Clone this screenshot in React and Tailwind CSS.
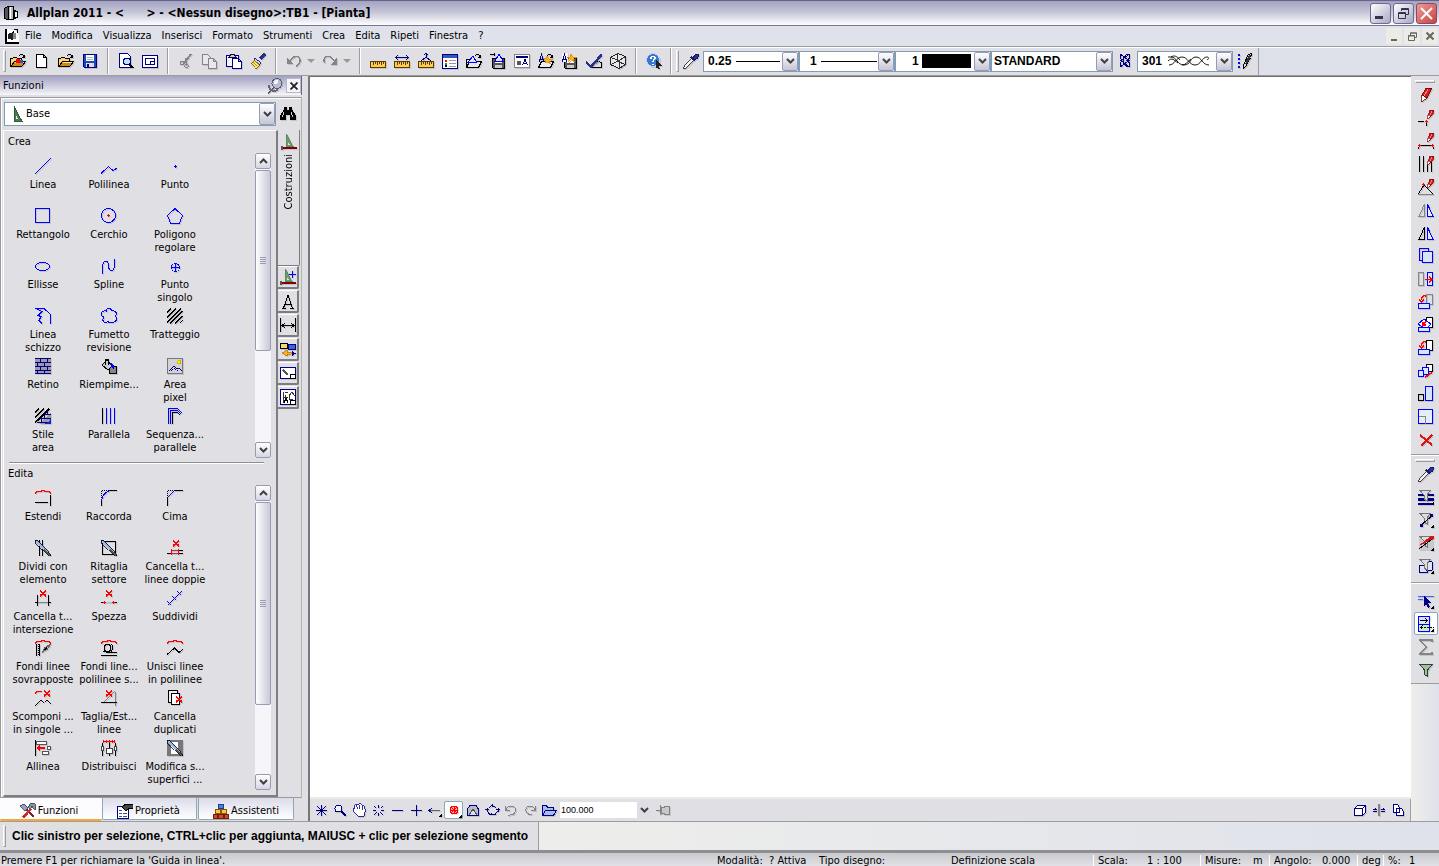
import React from 'react';

const B = '#0000ff';
const N = '#000084';
const K = '#000000';
const R = '#ff0000';
const G = '#848484';

// Small pieces shared by several glyphs
const Cross = ({ x = 6, y = 0 }) => (
  <path d={`M${x} ${y + 0.5}l6 5.5M${x + 6} ${y + 0.5}l-6 5.5`} stroke={R} strokeWidth="1.6" />
);
const RedPencil = ({ x = 0, y = 0 }) => (
  <g transform={`translate(${x} ${y})`}>
    <path d="M1 5L3 0l4 0-1 4-4 4z" fill="#d81c1c" stroke="#840000" strokeWidth="0.7" />
    <path d="M1 5l-.6 4L4 6z" fill="#fff" stroke="#840000" strokeWidth="0.6" />
    <path d="M3 5l2-4" stroke="#ff9a9a" strokeWidth="0.8" />
  </g>
);
const RedBrace = () => <path d="M.5 4V2.500h1V1.500h5V.5h3v1h5v1h1V4" stroke={R} />;
const Funnel = ({ fill = '#dcdce0', stroke = '#777' }) => (
  <path d="M1.500 1h11L9 6v6l-3-2V6z" fill={fill} stroke={stroke} />
);
const Folder = () => (
  <>
    <path d="M.5 13.500V5.500h2l1-1h3l1 1h4v3" fill="#ffd36b" stroke={K} />
    <path d="M.8 13.500l3.700-5h11l-3.700 5z" fill="#c98b17" stroke={K} />
    <path d="M5 9.500h8.500" stroke="#ffe59a" />
  </>
);
const OpenArrow = () => <path d="M9 2.500C10.500 1 13 1 14 3.500M14.500 1.500V4.500H12" stroke={K} />;
const Disk = () => (
  <>
    <path d="M2.500 5.500h12v10h-11l-1-1z" fill="#555" stroke={K} />
    <path d="M5 5.500h7v4H5z" fill="#fff" stroke="none" />
    <path d="M5 11.500h7v3.500H5z" fill="#ccc" stroke="none" />
  </>
);
const Triangle = () => (
  <>
    <path d="M5.500.500V12.500H12z" fill="#6d9c6d" stroke="#5b8b5f" />
    <path d="M7 8v3h2z" fill="#e0dfe3" />
  </>
);
const Ruler = () => (
  <>
    <path d="M.5 8.500h15v6H.5z" fill="#ffcc4d" stroke="#5a3c00" />
    <path d="M3.500 9v3M5.500 9v2M7.500 9v3M9.500 9v2M11.500 9v3M13.500 9v2" stroke="#5a3c00" />
  </>
);
const Knife = () => (
  <>
    <path d="M0 0h2.500L12 10l4 5.500h-2L8 10 .5 2.500z" fill="#9db8e8" stroke={K} strokeWidth="0.8" />
    <path d="M9 9.500l6 6" stroke="#555" strokeWidth="2" />
  </>
);

const ICONS = {
  app: (
    <>
      <path d="M1 3.500l4-2v13l-4-1z" fill="#555" stroke={K} />
      <path d="M5.500 1.500h5v13h-5z" fill="#bbb" stroke={K} />
      <path d="M7.500 2v12" stroke="#fff" />
      <path d="M11 5.500l3 1v6l-3 1z" fill="#f5f5f5" stroke={K} />
    </>
  ),
  doc: (
    <>
      <path d="M1 1.500v13h13v-8l-3-4z" fill="#fff" stroke="#fff" />
      <path d="M1.500 1v13.500H15" stroke={K} strokeWidth="2" />
      <path d="M4 6l5-2v8l-5-1z" fill="#222" />
      <path d="M9 5h3v6H9z" fill="#888" />
      <path d="M10 1.500h3M13.500 1v4M9.500 3v2" stroke={K} />
    </>
  ),
  project: (<><Folder /><path d="M6 6h4v4H6z" fill={R} /><path d="M10 7h3v3h-3z" fill="#2d50d8" /><OpenArrow /></>),
  newFile: <path d="M2.500 1.500h7l3 3v10h-10zM9.500 1.500v3h3" fill="#fff" stroke={K} />,
  open: (<><Folder /><OpenArrow /></>),
  save: (
    <>
      <path d="M1.500 1.500h13v13h-12l-1-1z" fill="#2049b8" stroke={N} />
      <path d="M4 2h8v6H4z" fill="#fff" />
      <path d="M5 4.500h6M5 6.500h6" stroke="#9bb" />
      <path d="M4 10h8v4H4z" fill="#ddd" />
      <path d="M5 11h2v3H5z" fill={N} />
    </>
  ),
  preview: (
    <>
      <path d="M1.500.5h8l3 3v11h-11z" fill="#fff" stroke={N} />
      <circle cx="9" cy="8.500" r="3.500" fill="#bfe3f5" stroke={N} />
      <path d="M11.500 11l3.500 4" stroke={K} strokeWidth="2" />
    </>
  ),
  layout: (
    <>
      <path d="M.5 2.500h15v12H.5zM3.500 5.500h9v6h-9z" fill="#fff" stroke={N} />
      <path d="M8.500 11V8.500H12" stroke={N} />
    </>
  ),
  cut: (
    <>
      <path d="M12.500 1L6 11M8 5l.5 8" stroke={G} strokeWidth="1.500" />
      <path d="M13 1L9 6l-2 3" stroke={G} strokeWidth="2" />
      <circle cx="4" cy="10" r="2" stroke={G} /><circle cx="8.500" cy="13" r="1.800" stroke={G} />
    </>
  ),
  copy: (
    <>
      <path d="M.5 1.500h5l3 3v7h-8z" fill="#e8e8ea" stroke={G} />
      <path d="M6.500 5.500h5l3 3v7h-8zM11.500 5.500v3h3" fill="#e8e8ea" stroke={G} />
    </>
  ),
  paste: (
    <>
      <path d="M.5 2.500h12v11H.5z" fill="#f4f4f8" stroke={N} strokeWidth="1.500" />
      <path d="M3 4.500l2-3h3l2 3z" fill="#f0d840" stroke={N} />
      <path d="M6.500 5.500h6l3 3v7h-9zM12.500 5.500v3h3" fill="#fff" stroke={N} />
    </>
  ),
  brush: (
    <>
      <path d="M15 1l-5 5" stroke="#27357f" strokeWidth="3" />
      <path d="M5 5l6 5-1.500 2L4 7z" fill="#c4d6f2" stroke={N} strokeWidth="0.8" />
      <path d="M4 7l6 5-4 3.500L.5 10z" fill="#ffe36b" stroke="#705000" strokeWidth="0.800" />
      <path d="M3 9l4 4M5 8l4 4" stroke="#a87800" strokeWidth="0.800" />
    </>
  ),
  undo: (<><path d="M1 4v7h6z" fill={G} /><path d="M4 8C7 2 14 2 14 8c0 2-2 4-4 5" stroke={G} strokeWidth="1.500" /></>),
  redo: (<><path d="M15 4v8H9z" fill={G} /><path d="M12 8C9 2 2 2 2 7c0 1 0 2 1 3" stroke={G} strokeWidth="1.500" /></>),
  ruler: <Ruler />,
  distance: (<><Ruler /><path d="M1 4.500h14M4 2L1.500 4.500 4 7M12 2l2.500 2.500L12 7" stroke={N} /></>),
  angle: (<><Ruler /><path d="M8 0v4L3 8M8 4l5 4M6 2l2-2 2 2" stroke={N} /></>),
  list: (
    <>
      <path d="M.5 1.500h15v14H.5z" fill="#fff" stroke={N} />
      <path d="M1 2h14v2.500H1z" fill="#3159b8" />
      <path d="M3 7h2M3 8h2" stroke={R} /><path d="M3 10.500h2" stroke="#0a0" strokeWidth="2" /><path d="M3 13h2" stroke={N} strokeWidth="2" />
      <path d="M7 7.500h7M7 10.500h7M7 13.500h7" stroke="#999" />
    </>
  ),
  layerOpen: (
    <>
      <path d="M.5 14.500l3-6h12l-3 6zM.5 14V6.500h3" fill="#e6e6e6" stroke={K} />
      <path d="M7 3l3.500 6h-8z" fill="#d9e8ff" stroke={B} />
      <OpenArrow />
    </>
  ),
  layerSave: (<><Disk /><path d="M0 1.500h4M4 0v3" stroke={K} /><path d="M9 1l4 7H5z" fill="#d9e8ff" stroke={B} /></>),
  textWin: (
    <>
      <path d="M.5 1.500h15v13H.5z" fill="#fff" stroke={G} />
      <path d="M2 4h12" stroke={N} strokeWidth="2" />
      <circle cx="5" cy="10" r="2.500" fill="#555" />
      <path d="M8.500 12.500L11 6.500l2.500 6M9.500 10.500h3" stroke={N} />
    </>
  ),
  starOpen: (
    <>
      <path d="M.5 14.500l3-6h12l-3 6z" fill="#eee" stroke={K} />
      <path d="M1 8.500L3.500 1.500 6 8.500M2 6h3" stroke={N} />
      <path d="M9 3l1.500 3h4l-3 2 1 3L9 9l-2 1 0-3-2-2h3z" fill="#ffb319" stroke="#d07800" strokeWidth="0.600" />
      <OpenArrow />
    </>
  ),
  starSave: (
    <>
      <Disk />
      <path d="M0 0h6v9H0z" fill="#f2f2f6" />
      <path d="M0 8.500L2.500 1.500 5 8.500M1 6h3" stroke={N} />
      <path d="M9 1l1.500 3h4l-3 2 1 3L9 7 6.500 9l.5-3-2-2h3z" fill="#ffb319" stroke="#d07800" strokeWidth="0.600" />
    </>
  ),
  check: (
    <>
      <path d="M5 14.500h10v-5L11 8" stroke={K} />
      <path d="M0 9l5 5L16 1" stroke="#24308c" strokeWidth="2.500" />
      <path d="M8 12l5-4" stroke={G} />
    </>
  ),
  cube: (
    <>
      <path d="M.5 4.500L8 .5l7.500 3v8l-6.500 4-8.500-4z" fill="#e8e8ec" stroke="#222" />
      <path d="M.5 4.500l8.500 3 6.500-4M9 7.500v8M7.500 1v7.500M.5 11.500l7-3 8 3" stroke="#333" />
    </>
  ),
  help: (
    <>
      <circle cx="7" cy="7" r="6.500" fill="#3a78cf" stroke="#bcd5f5" />
      <path d="M5 5.500C5 2.500 9.500 3 9 5.500 8.700 7 7 6.500 7 9M7 10.500v1" stroke="#fff" strokeWidth="1.500" />
      <path d="M10 7l6 6-3 0 1 3-2 0-1-2-1 1z" fill="#222" />
    </>
  ),
  dropper: (
    <>
      <path d="M9 5L2 12l-1.500 3.500L4 14l7-7z" fill="#f4f4f4" stroke="#333" strokeWidth="0.900" />
      <path d="M8 4l4 4" stroke="#1b1b6b" strokeWidth="2" />
      <path d="M10 5l3-4 2.500 1-.5 2.500L12 7z" fill="#2333a8" stroke="#14145f" />
    </>
  ),
  hatchLine: (
    <path d="M4 1.500l8 6-8 6M12 1.500l-8 6 8 6M3.500 1v5M3.500 9v5M12 1.500h-2l-4 3v5l4 4h2v-4l-2-2 2-2z" stroke={N} />
  ),
  pencilDots: (
    <>
      <path d="M2 1v14" stroke={B} strokeWidth="2" strokeDasharray="2 2" />
      <path d="M7 11L11 2l3.500-1.500-1 4L9 13l-2.500 2z" fill="#ddd" stroke={K} />
      <path d="M9 11l4-9" stroke="#333" strokeWidth="2" />
    </>
  ),
  binoculars: (
    <>
      <path d="M4 1h3v3h2V1h3v2l4 7v4h-6v-5H6v5H0v-4l4-7V1z" fill={K} />
      <path d="M4 6l-2 5M11 6l2 5" stroke="#fff" strokeWidth="0.800" />
    </>
  ),
  pinRound: (
    <>
      <path d="M7 10l-6 5" stroke="#555" strokeWidth="1.500" />
      <path d="M2 7c0 5 4 7 9 5" stroke="#667" strokeWidth="2" />
      <circle cx="10" cy="5.500" r="5" fill="#b8bccb" stroke="#5b6076" />
      <circle cx="9" cy="4" r="2" fill="#f1f3fa" />
    </>
  ),
  base: (<><path d="M5 0v15.500h8z" fill="#4c7c4c" stroke="#2f5a38" /><path d="M7 9v4h2z" fill="#e8f1e8" /></>),

  // Crea
  line: <path d="M0 16L16 0" stroke={B} />,
  polyline: <path d="M0 15.500L7.500 8.500l4.500 4 4-2.500" stroke={B} />,
  point: <path d="M7 8.500h3M8.500 7v3" stroke={B} />,
  rect: <path d="M.5 .5h14v14h-14z" stroke={B} />,
  circle: (<><circle cx="7.500" cy="7.500" r="7" stroke={B} /><path d="M6 7.500h3M7.500 6v3" stroke={R} /></>),
  pentagon: <path d="M8 .5l7.500 7-3 7.500h-9L.5 7.500z" stroke={B} />,
  ellipse: <ellipse cx="7.500" cy="8.500" rx="7" ry="4" stroke={B} />,
  spline: <path d="M1.500 15.500V9C2 3 6 1 7.500 6v3c1 5 5 5 6-1V.5" stroke={B} />,
  singlePoint: (<><circle cx="8.500" cy="9.500" r="4" stroke={B} /><path d="M4 9.500h9M8.500 5v9" stroke={B} /></>),
  sketch: <path d="M0 .5h9l6.500 6V15.500M1 .5l6 3-4 4 3 1-2 4 3 3" stroke={B} />,
  cloud: (
    <path d="M5 3C5-.5 10-.5 11 3c5-1 5 4 3 5 3 3 1 7-3 6-2 2-3 1-4-1-3 3-7 0-4-4C-1 8-1 2 5 3z" stroke={B} />
  ),
  hatch: <path d="M0 4.500L4 .5M0 9.500L9 .5M0 14.500L14 .5M3 15.500L15.500 3M8 15.500L15.500 8M12.500 15.500l3-3" stroke={K} />,
  brick: (
    <>
      <path d="M0 0h16v16H0z" fill="#9a9aa6" />
      <path d="M0 .5h16M0 4.500h16M0 8.500h16M0 12.500h16M0 15.500h16M5.500 0v4M12.500 0v4M2.500 5v3M9.500 5v3M5.500 9v3M12.500 9v3M2.500 13v3M9.500 13v3" stroke={N} />
    </>
  ),
  fill: (
    <>
      <path d="M8.500 8.500h7v7h-7z" fill={G} stroke={K} />
      <path d="M1 7l5-5 5 6-4 4z" fill="#ccc" stroke={K} />
      <path d="M4.500 7V1.500h3V7" stroke={K} />
      <path d="M9 5c3 0 5 2 4 7l-3-4z" fill={B} />
    </>
  ),
  picture: (
    <>
      <path d="M.5.500h15v15H.5z" fill="#d2d2d6" stroke="#777" />
      <circle cx="12" cy="4" r="2" fill="#ffef00" stroke="#998800" strokeWidth="0.500" />
      <path d="M2 13l5-5 3 3 2-1 3 3" stroke={N} />
      <path d="M4 13l3-3 2 3M10 13l2-1" stroke={N} strokeDasharray="1 1" />
    </>
  ),
  areaStyle: (
    <>
      <path d="M4 16L16 4v12z" fill="#9a9aa6" />
      <path d="M0 4.500L4 .5M0 9.500L9 .5M0 14.500L14 .5M3 13L15 1" stroke={K} />
      <path d="M9 6.500h7M5 10.500h11M2 14.500h10M12.500 3v3M9.500 7v3M6.500 11v4" stroke={N} />
      <path d="M9 16c4-1 6-3 7-6v6z" fill="#1122cc" />
    </>
  ),
  parallel: (<><path d="M1.500 0v16" stroke={K} /><path d="M5.500 0v16M9.500 0v16M13.500 0v16" stroke={B} /></>),
  parallelSeq: (
    <>
      <path d="M1.500 16V.5h9l5 5M3.500 16V2.500h7l4 4" stroke={B} />
      <path d="M5.500 16V4.500h5l3 3" stroke={K} />
    </>
  ),

  // Edita
  extend: (<><RedBrace /><path d="M15.500 5v11M0 12.500h13" stroke={K} /></>),
  fillet: (<><path d="M.5 10V.5H10" stroke={K} strokeDasharray="1 1" /><path d="M.5 11C1 5 5 1 10 .500" stroke={B} /><path d="M.5 11v5M9 .5h7" stroke={K} /></>),
  chamfer: (<><path d="M.5 8V.5H8" stroke={K} strokeDasharray="1 1" /><path d="M.5 7.500L7.500 .5" stroke={B} /><path d="M.5 7v9M8 .5h8" stroke={K} /></>),
  divide: (<><path d="M4.500 0v16M7.500 0v16" stroke={K} /><Knife /></>),
  clip: (<><path d="M1.500 1.500h13v13h-13z" stroke={K} /><Knife /></>),
  eraseDouble: (<><Cross x={6} /><path d="M0 13.500h16M5 10.500h11" stroke={K} /><path d="M5 13.500h6M5 10.500h6" stroke="#a33" /><path d="M4.500 9v6M11.500 9v6" stroke={R} /></>),
  eraseCross: (<><Cross x={5} /><path d="M2.500 5v11M13.500 5v11M0 12.500h3M13 12.500h3" stroke={K} /><path d="M3 12.500h10" stroke={G} /></>),
  breakLine: (<><Cross x={5} /><path d="M0 12.500h16" stroke={K} /><path d="M5 12.500h6" stroke="#bbb" /><path d="M2 12.500h3M3.500 11v3M11 12.500h3M12.500 11v3" stroke={R} /></>),
  subdivide: (<><path d="M2 14L14 2" stroke={K} /><path d="M.5 11.500l4 4M.5 15.500l4-4M5.500 6.500l4 4M5.500 10.500l4-4M10.500 1.500l4 4M10.500 5.500l4-4" stroke={B} /></>),
  mergeLines: (<><RedBrace /><path d="M1.500 4v12M4.500 4v12M8 12l6-7" stroke={K} /><path d="M3 4v12" stroke={K} strokeDasharray="1 1" /><path d="M7.500 12l2-4 6-4-3 5z" stroke="#666" /></>),
  mergePoly: (<><RedBrace /><circle cx="6.500" cy="8" r="3.500" stroke={K} /><path d="M10 4.500c3 1 2 5 0 7M2 11.500h5M5 12.500h11M0 15.500h16" stroke={K} /></>),
  joinPoly: (<><RedBrace /><path d="M0 14.500L7.500 8l4.500 4.500 4-3" stroke={K} /></>),
  explode: (<><path d="M.5 4V2.500h1V1.500h5" stroke={R} /><Cross x={9} /><path d="M0 16l6-6 3 3M10 12l2-2 4 4" stroke={K} /></>),
  trim: (<><path d="M14.500 2v14M3 12L14 1" stroke={G} /><path d="M0 12.500h16" stroke={K} /><Cross x={5} /></>),
  dupDelete: (<><path d="M1.500 .5h9v12h-9z" fill="#eee" stroke={K} /><path d="M4.500 3.500h8v11h-8z" fill="#fff" stroke={K} /><Cross x={9} y={6} /></>),
  align: (
    <>
      <path d="M.5 0v16" stroke={K} />
      <path d="M1.500 1.500h10v3h-10zM12.500 6.500h3v3h-3zM7.500 11.500h6v3h-6z" fill="#fff" stroke="#555" />
      <path d="M1 8l4-3v2h5v2H5v2z" fill={R} />
    </>
  ),
  distribute: (
    <>
      <path d="M2 1.500h12M2.500 0v3M5.500 0v3M8.500 0v3M11.500 0v3M13.500 0v3" stroke={R} />
      <path d="M1.500 3v13M8.500 3v13M14.500 3v13" stroke={K} />
      <path d="M.5 6.500h2v4h-2zM5.500 8.500h6v5h-6zM13.500 6.500h2v4h-2z" fill="#fff" stroke="#444" />
    </>
  ),
  modifyArea: (<><path d="M0 0h16v16H0z" fill="#777" /><path d="M4 2h7v12H4z" fill="#fff" /><Knife /></>),

  // Side tabs
  tabBuild: (<><Triangle /><path d="M1 14h15" stroke="#840000" strokeWidth="2" /><path d="M1 12v4" stroke="#555" strokeWidth="2" /></>),
  tabBase: (<><Triangle /><path d="M1 14h15" stroke="#840000" strokeWidth="2" /><path d="M1 12v4" stroke="#555" strokeWidth="2" /><path d="M12.500 2v7M9 5.500h7" stroke={B} /></>),
  tabText: <path d="M2 15.500h4M10 15.500h4M3.500 15L8 2.500 12.500 15M5 11.500h6" stroke={K} />,
  tabDim: <path d="M.5 1v14M15.500 1v14M2 8.500h12M5 6L2 8.500 5 11M11 6l3 2.500-3 2.500" stroke={K} />,
  tabSwap: (
    <>
      <path d="M.5 2.500h7v5h-7z" fill="#ffd36b" stroke={K} /><path d="M8.500 3.500h7v5h-7z" fill="#3c66c9" stroke={N} />
      <path d="M7 9l-5 3 5 3v-2h4v-2H7z" fill="#ffb319" stroke="#a06000" strokeWidth="0.600" />
      <path d="M12 10l4 2.500-4 2.500z" fill={N} />
    </>
  ),
  tabWindow: (<><path d="M.5 2.500h15v11H.5z" fill="#fff" stroke={N} /><path d="M3 5l5 5" stroke="#555" strokeWidth="1.500" /><path d="M10.500 9.500h5v4h-5z" fill="#fff" stroke={K} /></>),
  tabPlan: (<><path d="M.5.500h15v15H.5z" fill="#fff" stroke={N} /><path d="M3.500 3v11M5 3.500h3M5.500 6v3M3 8.500h5M9 7l3-4 3 4M9.500 7v3h3" stroke="#333" /><path d="M4 13.500l2-4 2 4" stroke={K} /><path d="M10.500 11.500h5v4h-5z" fill="#fff" stroke={K} /></>),

  // Bottom tabs
  tools: (
    <>
      <path d="M5 5l9 9" stroke="#7c2230" strokeWidth="2.500" />
      <path d="M11 6L3 14.500" stroke="#c92a2a" strokeWidth="2.500" />
      <path d="M0 3l4-2 4 4-3 3-3-3z" fill="#8ea6c4" stroke="#334" strokeWidth="0.800" />
      <path d="M8 4l3-4 4 1 1 5-2 0-2-3-2 3z" fill="#8794ac" stroke="#334" strokeWidth="0.800" />
    </>
  ),
  props: (
    <>
      <path d="M.5 3.500h11v12H.5z" fill="#fff" stroke={N} />
      <path d="M2 7.500h3M2 10.500h3M2 13.500h3M6 10.500h4M6 13.500h4" stroke="#3a4a9a" />
      <path d="M5 4l4-3h7v5l-3-1-4 3z" fill="#444" stroke={K} />
    </>
  ),
  bricks: (
    <>
      <path d="M5.500 1.500h5v4h-5z" fill="#4d7fe0" stroke="#1c3f92" />
      <path d="M2.500 6.500h5v4h-5zM8.500 6.500h5v4h-5z" fill="#ffc63b" stroke="#8a5a00" />
      <path d="M.5 11.500h4v4h-4zM5.500 11.500h5v4h-5zM11.500 11.500h4v4h-4z" fill="#cf4a2c" stroke="#7a1c0c" />
    </>
  ),

  // View bar
  star8: <path d="M8.500 3v11M3 8.500h11M4 4l9 9M13 4l-9 9" stroke={N} />,
  zoom: (<><circle cx="6.500" cy="6.500" r="3.500" fill="#f2f6ff" stroke={N} /><path d="M9.500 9.500l4.500 4.500" stroke={N} strokeWidth="1.500" /></>),
  hand: <path d="M2 7l2-1-1-2 2-2 2 1 2-2 2 2 2 1 1 3v3l-1 4H7l-4-4-1-3zM5 3l2 4M8 3l1 4M11 4v4" fill="#fff" stroke={N} strokeWidth="0.800" />,
  burst: <path d="M8.500 3v3M8.500 11v3M3 8.500h3M11 8.500h3M4 4l2.500 2.500M10.500 10.500L13 13M13 4l-2.500 2.500M6.500 10.500L4 13" stroke={N} />,
  minus: <path d="M3 8.500h11" stroke={N} />,
  plus: <path d="M3 8.500h11M8.500 3v11" stroke={N} />,
  back: (<><path d="M2 8.500h11" stroke="#666" /><path d="M5 6L2 8.500 5 11" stroke={N} /><path d="M15 11v4h-4z" fill={K} /></>),
  target: (<><circle cx="8" cy="8" r="4" fill="#ffb0b0" stroke={R} /><path d="M5 5l6 6M11 5l-6 6M8.500 4v8M4 8.500h8" stroke={R} /><path d="M16 12v4h-4z" fill={K} /></>),
  dome: (<><path d="M2.500 13.500V7l3-4h5l3 4v6.500z" fill="#b8bcc8" stroke={N} /><path d="M4 13l4-6 4 6" fill="#e0e0e4" stroke="#555" /></>),
  orbit: <path d="M5 5.500l3-2 4 2M3 9l3 3.500h5l3-3.500M1 7.500h4M3 6v4M12 7.500h4M14 6v4M8 11l-2 2M8.500 2v3" stroke={N} />,
  undoThin: <path d="M5 13c9 1 10-9 3-9-2 0-4 1-5 4M2.500 4v4H7" stroke={G} />,
  redoThin: <path d="M10 13C1 12 3 4 8 4c2 0 4 1 5 4M13.500 4v4H9" stroke={G} />,
  viewOpen: <path d="M1.500 13.500V3.500h4l1 2h6v2M1.500 13.500l3-5h11l-3 5z" fill="#a9bde8" stroke={N} />,
  pin: (<><path d="M1 8h4" stroke={G} /><path d="M5.500 3v10M6 5.500h3l1-1h4v8h-4l-1-1H6z" fill="#c8c8cc" stroke={G} /></>),
  box3d: <path d="M2.500 6.500h8v7h-8zM2.500 6.500l3-3h8v7l-3 3M10.500 6.500l3-3" fill="#fff" stroke={N} />,
  split: (<><path d="M8 2v12" stroke={G} strokeWidth="2" /><path d="M2 7.500h4M2 9.500h4M4.500 6v2M10 7.500h4M10 9.500h4M12.500 6v2" stroke={N} /></>),
  pages: <path d="M3.500 2.500h4l2 3v5h-6zM6.500 6.500h5l2 3v4h-7z" fill="#fff" stroke={N} />,

  // Right tool column
  pencil: (
    <>
      <path d="M4 8L8 1l6 0-5 10z" fill="#d81c1c" stroke="#6d0000" strokeWidth="0.800" />
      <path d="M4 8l-1 7L9 11z" fill="#fff" stroke="#6d0000" strokeWidth="0.800" />
      <path d="M6 9l4-7" stroke="#ff8d8d" />
    </>
  ),
  penNode: (<><RedPencil x={9} /><path d="M0 11.500h6M8.500 13v3" stroke={K} /><path d="M7 11.500h3M8.500 10v3" stroke={R} /></>),
  penSegment: (<><RedPencil x={9} /><path d="M2 12.500h12M.5 14v2M15.500 14v2" stroke={K} /><path d="M0 12.500h3M1.500 11v3M13 12.500h3M14.500 11v3" stroke={R} /></>),
  penParallel: (<><path d="M1.500 0v16M5.500 0v16M9.500 9v7M13.500 6v10" stroke={K} /><RedPencil x={9} /></>),
  penAngle: (<><path d="M0 15.500L6 6l9 9" stroke={K} /><path d="M0 15.500h16" stroke={G} /><RedPencil x={9} /><path d="M4 5.500h3M5.500 4v3" stroke={R} /></>),
  mirrorGray: (<><path d="M1 14.500L6.500 2v12.500z" stroke={G} /><path d="M15 14.500L9.500 2v12.500z" fill="#e9eeff" stroke={B} /></>),
  mirror: (<><path d="M1 14.500L6.500 2v12.500z" stroke={K} /><path d="M15 14.500L9.500 2v12.500z" fill="#e9eeff" stroke={B} /></>),
  copyBlue: (<><path d="M1.500 .5h9v12h-9z" stroke={B} /><path d="M4.500 3.500h10v11h-10z" fill="#d7e6ff" stroke={B} /></>),
  move: (<><path d="M.5 1.500h5v13h-5z" stroke={G} /><path d="M9.500 1.500h5v13h-5z" fill="#d7e6ff" stroke={B} /><path d="M7 8.500h6M11 6l3 2.500-3 2.500" stroke={R} strokeWidth="1.500" /></>),
  rotateGray: (<><path d="M8.500 .5h6v10h-6z" stroke={G} /><path d="M.5 9.500h11v5H.5z" fill="#d7e6ff" stroke={B} /><path d="M8 2C5 1 3 3 3.500 6M1 5l2.500 3L6 5" stroke={R} strokeWidth="1.300" /></>),
  rotateMulti: (<><path d="M8.500 .5h6v10h-6z" fill="#fff" stroke={K} /><path d="M0 7l6-5 7 5-5 5z" fill="#fff" stroke={B} /><path d="M.5 10.500h11v4H.5z" fill="#d7e6ff" stroke={B} /><path d="M9 4L5 7M5 5v3h3" stroke={R} strokeWidth="1.300" /></>),
  rotate: (<><path d="M8.500 .5h6v10h-6z" fill="#fff" stroke={K} /><path d="M.5 9.500h11v5H.5z" fill="#d7e6ff" stroke={B} /><path d="M8 2C5 1 3 3 3.500 6M1 5l2.500 3L6 5" stroke={R} strokeWidth="1.300" /></>),
  copyRow: (<><path d="M8.500 1.500h6v7h-6z" fill="#fff" stroke={K} /><path d="M4.500 4.500h6v7h-6z" fill="#d7e6ff" stroke={B} /><path d="M.5 7.500h5v6h-5z" fill="#d7e6ff" stroke={B} /><path d="M7 14.500l7-5" stroke={R} strokeWidth="1.500" /></>),
  scale: (<><path d="M.5 8.500h5v6h-5z" stroke={K} /><path d="M7.500 .5h7v14h-7z" fill="#d7e6ff" stroke={B} /></>),
  resize: (<><path d="M.5 .5h14v14h-14z" fill="#e4eeff" stroke={B} /><path d="M.5 7.500h7v7" stroke={G} /></>),
  remove: <path d="M2 3l12 10M14 3L3 14" stroke="#e01010" strokeWidth="2" />,
  filterLines: (<><path d="M0 5.500h16M0 14.500h16" stroke={N} strokeWidth="2" /><path d="M0 10h16" stroke={N} strokeWidth="3" /><Funnel /><path d="M16 12v4h-4z" fill={K} /></>),
  filterSegment: (<><Funnel /><path d="M3 13L14 4" stroke={K} /><path d="M2 12h3v3H2zM12 2h3v3h-3z" fill={N} /><path d="M16 12v4h-4z" fill={K} /></>),
  filterColor: (<><path d="M1 2h14v13H1z" fill="#cacace" /><Funnel /><path d="M0 11L13 1h3v3L5 9z" fill="#d41414" /><path d="M1 14L14 4" stroke={K} /><path d="M16 12v4h-4z" fill={K} /></>),
  filterShapes: (<><path d="M1.500 7.500h8v7h-8zM8 3l6 1v8l-5 1z" fill="#dce4f4" stroke={N} /><Funnel /><path d="M16 12v4h-4z" fill={K} /></>),
  select: (<><path d="M0 3.500h16M0 6.500h5" stroke="#4060ff" /><path d="M6 3l8 7h-4l2 4-2 1-2-4-2 3z" fill={N} /><path d="M16 12v4h-4z" fill={K} /></>),
  selectArea: (<><path d="M.5 .5h11v8H.5z" fill="#d6e6ff" stroke={B} /><path d="M.5 8.500h11v7H.5z" fill="#c2f5b8" stroke={B} /><path d="M2 4.500h7M7 2l2 2.500L7 7" stroke={K} /><path d="M3 11.500h13" stroke={K} strokeDasharray="2 1" /><path d="M4.500 9.500l-2 2 2 2" stroke={K} /><path d="M16 12v4h-4z" fill={K} /></>),
  sum: <path d="M14 3V1H2l6 7-6 7h12v-2.500" stroke={G} strokeWidth="1.600" />,
  filter: <path d="M2 2.500h12L9.500 8v6.500l-3-2V8z" fill="#a3bfa0" stroke="#2c402c" />,
};

const Icon = ({ name, shadow = true }) => (
  <svg
    width="16"
    height="16"
    viewBox="0 0 16 16"
    fill="none"
    shapeRendering="crispEdges"
    aria-hidden="true"
    className={shadow ? 'shrink-0 drop-shadow-[1px_1px_0px_rgba(0,0,0,0.12)]' : 'shrink-0'}
  >
    {ICONS[name]}
  </svg>
);

const Chevron = ({ up = false, className = '' }) => (
  <svg width="9" height="6" viewBox="0 0 9 6" fill="none" className={className} aria-hidden="true">
    <path d={up ? 'M1 5l3.500-3.500L8 5' : 'M1 1l3.500 3.500L8 1'} stroke="#404040" strokeWidth="2" />
  </svg>
);

const ToolButton = ({ icon, label, className = 'w-6 h-6' }) => (
  <button type="button" aria-label={label || icon} className={`flex items-center justify-center shrink-0 ${className}`}>
    <Icon name={icon} />
  </button>
);

const Separator = () => (
  <div className="w-3 self-stretch flex justify-center">
    <div className="w-0.5 bg-[#9d9da1] border-r border-white"></div>
  </div>
);

const Grip = () => <div className="w-[3px] h-[22px] border border-l-white border-t-white border-r-[#9d9da1] border-b-[#9d9da1] shrink-0"></div>;

const Combo = ({ label, value, className, textClass, children }) => (
  <div className={`relative flex items-center bg-white border border-[#7f9db9] ${className}`}>
    <select aria-label={label} defaultValue={value} className={`appearance-none w-full h-full bg-transparent outline-none ${textClass}`}>
      <option>{value}</option>
    </select>
    {children}
    <span className="absolute inset-y-0 right-0 w-4 pointer-events-none flex items-center justify-center border border-[#9a9ab2] rounded-[2px] bg-linear-to-b from-white to-[#c5c5d6]">
      <Chevron />
    </span>
  </div>
);

const ScrollBar = ({ thumb }) => (
  <div className="w-4 flex flex-col bg-[#f6f6fa] shrink-0">
    <button type="button" aria-label="Su" className="h-4 w-full flex items-center justify-center border border-[#9a9ab2] rounded-[2px] bg-linear-to-b from-white to-[#d6d6e2]">
      <Chevron up />
    </button>
    <div className={`${thumb} flex flex-col items-center justify-center gap-px border border-[#9a9ab2] rounded-[2px] bg-linear-to-r from-white to-[#c9c9d9] mt-px`}>
      {[1, 2, 3, 4].map(i => <span key={i} className="w-1.5 h-px bg-[#9a9ab2]"></span>)}
    </div>
    <button type="button" aria-label="Giù" className="h-4 w-full mt-auto flex items-center justify-center border border-[#9a9ab2] rounded-[2px] bg-linear-to-b from-white to-[#d6d6e2]">
      <Chevron />
    </button>
  </div>
);

const MENU = ['File', 'Modifica', 'Visualizza', 'Inserisci', 'Formato', 'Strumenti', 'Crea', 'Edita', 'Ripeti', 'Finestra', '?'];

const CREA = [
  ['line', 'Linea'], ['polyline', 'Polilinea'], ['point', 'Punto'],
  ['rect', 'Rettangolo'], ['circle', 'Cerchio'], ['pentagon', 'Poligono', 'regolare'],
  ['ellipse', 'Ellisse'], ['spline', 'Spline'], ['singlePoint', 'Punto', 'singolo'],
  ['sketch', 'Linea', 'schizzo'], ['cloud', 'Fumetto', 'revisione'], ['hatch', 'Tratteggio'],
  ['brick', 'Retino'], ['fill', 'Riempime...'], ['picture', 'Area', 'pixel'],
  ['areaStyle', 'Stile', 'area'], ['parallel', 'Parallela'], ['parallelSeq', 'Sequenza...', 'parallele'],
];

const EDITA = [
  ['extend', 'Estendi'], ['fillet', 'Raccorda'], ['chamfer', 'Cima'],
  ['divide', 'Dividi con', 'elemento'], ['clip', 'Ritaglia', 'settore'], ['eraseDouble', 'Cancella t...', 'linee doppie'],
  ['eraseCross', 'Cancella t...', 'intersezione'], ['breakLine', 'Spezza'], ['subdivide', 'Suddividi'],
  ['mergeLines', 'Fondi linee', 'sovrapposte'], ['mergePoly', 'Fondi line...', 'polilinee s...'], ['joinPoly', 'Unisci linee', 'in polilinee'],
  ['explode', 'Scomponi ...', 'in singole ...'], ['trim', 'Taglia/Est...', 'linee'], ['dupDelete', 'Cancella', 'duplicati'],
  ['align', 'Allinea'], ['distribute', 'Distribuisci'], ['modifyArea', 'Modifica s...', 'superfici ...'],
];

const RIGHT_TOP = ['pencil', 'penNode', 'penSegment', 'penParallel', 'penAngle', 'mirrorGray', 'mirror', 'copyBlue', 'move', 'rotateGray', 'rotateMulti', 'rotate', 'copyRow', 'scale', 'resize', 'remove'];
const RIGHT_MID = ['dropper', 'filterLines', 'filterSegment', 'filterColor', 'filterShapes'];

const ToolSection = ({ title, items, thumb }) => (
  <section className="pt-[3px] pb-1">
    <h2 className="pl-1 h-[14px] leading-[14px]">{title}</h2>
    <div className="flex mt-1">
      <div className="grid grid-cols-[repeat(3,66px)] auto-rows-[50px] pt-[5px] pl-1.5">
        {items.map(([icon, a, b]) => (
          <button key={icon} type="button" className="flex flex-col items-center leading-[13px] whitespace-nowrap">
            <Icon name={icon} />
            <span className="mt-1">{a}</span>
            {b && <span>{b}</span>}
          </button>
        ))}
      </div>
      <div className="ml-auto mr-[5px] flex">
        <ScrollBar thumb={thumb} />
      </div>
    </div>
  </section>
);

const TitleBar = () => (
  <header className="h-[26px] shrink-0 flex items-center pl-[3px] pr-0.5 border-y border-t-[#65648a] border-b-[#77769a] bg-linear-to-b from-[#a3a2c2] via-[#c9c9da] to-white">
    <Icon name="app" shadow={false} />
    <h1 className="ml-2 font-bold text-[12px] whitespace-pre">{'Allplan 2011 - <      > - <Nessun disegno>:TB1 - [Pianta]'}</h1>
    <div className="ml-auto flex gap-0.5">
      <button type="button" aria-label="Riduci a icona" className="w-[21px] h-[21px] rounded-[3px] border border-[#6b6a90] bg-linear-to-br from-white to-[#a9a8c4] flex items-end p-1">
        <span className="w-2 h-[3px] bg-[#333350]"></span>
      </button>
      <button type="button" aria-label="Ripristina" className="w-[21px] h-[21px] rounded-[3px] border border-[#6b6a90] bg-linear-to-br from-white to-[#a9a8c4] flex items-center justify-center">
        <svg width="11" height="11" viewBox="0 0 11 11" fill="none" stroke="#333350">
          <path d="M3.500 3V.5h7v6H8M3 1.500h8M.5 4.500h7v6h-7zM.5 5.500h7" />
        </svg>
      </button>
      <button type="button" aria-label="Chiudi" className="w-[21px] h-[21px] rounded-[3px] border border-[#8a4a5a] bg-linear-to-br from-[#e99a9a] to-[#c9403f] flex items-center justify-center">
        <svg width="13" height="13" viewBox="0 0 13 13" stroke="#fff" strokeWidth="2">
          <path d="M1 1l11 11M12 1L1 12" />
        </svg>
      </button>
    </div>
  </header>
);

const MenuBar = () => (
  <nav className="h-[21px] shrink-0 flex items-center pl-1 bg-[#dfe2eb] border-b border-[#9d9da1]">
    <Icon name="doc" shadow={false} />
    <div className="flex">
      {MENU.map(item => (
        <button key={item} type="button" className="px-[5px]">{item}</button>
      ))}
    </div>
    <div className="ml-auto flex gap-0.5 pr-px text-[#66665e]">
      <button type="button" aria-label="Riduci finestra" className="w-4 h-4 bg-[#ecebe6] flex items-end justify-center pb-[3px]">
        <span className="w-1.5 h-0.5 bg-[#66665e]"></span>
      </button>
      <button type="button" aria-label="Ripristina finestra" className="w-4 h-4 bg-[#ecebe6] flex items-center justify-center">
        <svg width="9" height="9" viewBox="0 0 9 9" fill="none" stroke="currentColor">
          <path d="M2.500 3V1h6v4.500H7M2 1h7M.5 3.500h6v5h-6zM0 4h7" />
        </svg>
      </button>
      <button type="button" aria-label="Chiudi finestra" className="w-4 h-4 bg-[#ecebe6] flex items-center justify-center">
        <svg width="8" height="8" viewBox="0 0 8 8" stroke="currentColor" strokeWidth="2">
          <path d="M.5 .5l7 7M7.500 .5l-7 7" />
        </svg>
      </button>
    </div>
  </nav>
);

const Caret = () => (
  <svg width="12" height="6" viewBox="0 0 12 6" aria-hidden="true"><path d="M1 1h8L5 5z" fill="#9a9a90" /></svg>
);

const Toolbar = () => (
  <div className="h-[29px] shrink-0 flex bg-[#dfe1ea] border-t border-b border-t-white border-b-[#9d9da1]">
    <div className="flex items-center bg-[#e0dfe3] pl-[3px] pr-px pb-px border-r border-[#9d9da1]">
      <Grip />
      {['project', 'newFile', 'open', 'save'].map(i => <ToolButton key={i} icon={i} />)}
      <Separator />
      {['preview', 'layout'].map(i => <ToolButton key={i} icon={i} />)}
      <Separator />
      {['cut', 'copy', 'paste', 'brush'].map(i => <ToolButton key={i} icon={i} />)}
      <Separator />
      <ToolButton icon="undo" />
      <Caret />
      <ToolButton icon="redo" />
      <Caret />
      <Separator />
      {['ruler', 'distance', 'angle', 'list', 'layerOpen', 'layerSave', 'textWin', 'starOpen', 'starSave', 'check', 'cube'].map(i => (
        <ToolButton key={i} icon={i} />
      ))}
      <Separator />
      <ToolButton icon="help" />
      <div className="w-0.5 self-stretch mx-1 bg-[#9d9da1] border-r border-white"></div>
      <Grip />
      <ToolButton icon="dropper" />
      <Combo label="Spessore penna" value="0.25" className="w-24 h-[21px]" textClass="font-['Liberation_Sans',sans-serif] font-bold text-xs pl-1">
        <span className="absolute left-8 w-11 h-px bg-black pointer-events-none"></span>
      </Combo>
      <Combo label="Tipo di linea" value="1" className="w-24 h-[21px]" textClass="font-['Liberation_Sans',sans-serif] font-bold text-xs pl-2.5">
        <span className="absolute left-[21px] w-14 h-px bg-black pointer-events-none"></span>
      </Combo>
      <Combo label="Colore" value="1" className="w-24 h-[21px]" textClass="font-['Liberation_Sans',sans-serif] font-bold text-xs pl-4">
        <span className="absolute left-[26px] w-[49px] h-3.5 bg-black pointer-events-none"></span>
      </Combo>
      <Combo label="Layer" value="STANDARD" className="w-[122px] h-[21px]" textClass="font-['Liberation_Sans',sans-serif] font-bold text-xs pl-0.5" />
      <ToolButton icon="hatchLine" />
      <Combo label="Motivo" value="301" className="w-24 h-[21px]" textClass="font-['Liberation_Sans',sans-serif] font-bold text-xs pl-1">
        <svg width="42" height="12" viewBox="0 0 42 12" fill="none" stroke="#000" className="absolute left-[30px] pointer-events-none">
          <path d="M0 2h3c6 0 6 8 13 8S22 2 28 2s6 8 13 8M1 10c6 0 7-8 13-8s7 8 13 8 7-8 12-8c2 0 2 2 0 3M3 2c3-2 6-1 9 3M14 10c4 0 6-4 9-6M0 6c4-4 6-1 10 2" strokeWidth="0.900" />
        </svg>
      </Combo>
      <ToolButton icon="pencilDots" />
    </div>
  </div>
);

const FunctionPanel = () => (
  <aside className="w-[302px] shrink-0 flex flex-col bg-[#e0dfe3]">
    <div className="h-[19px] shrink-0 flex items-center pl-[3px] border-r border-[#65648a] bg-linear-to-b from-[#a3a2c2] to-[#f6f6fa]">
      <h2>Funzioni</h2>
      <div className="ml-auto flex items-center gap-0.5">
        <ToolButton icon="pinRound" label="Blocca" className="w-[18px] h-4" />
        <button type="button" aria-label="Chiudi pannello" className="w-[15px] h-[15px] bg-[#f4f4fa] border border-[#b9b9cc] flex items-center justify-center">
          <svg width="8" height="8" viewBox="0 0 8 8" stroke="#222" strokeWidth="1.800"><path d="M.5 .5l7 7M7.500 .5l-7 7" /></svg>
        </button>
      </div>
    </div>
    <div className="flex-1 mt-0.5 flex flex-col border border-[#9a9a9e] border-r-[#b4b4a8] shadow-[inset_1px_1px_0_#fff]">
      <div className="flex items-center pl-[3px] py-1">
        <Combo label="Modulo" value="Base" className="w-[272px] h-6" textClass="pl-[21px]">
          <span className="absolute left-1 pointer-events-none"><Icon name="base" shadow={false} /></span>
        </Combo>
        <ToolButton icon="binoculars" label="Cerca" />
      </div>
      <div className="flex-1 flex pl-0.5">
        <div className="w-[275px] pt-px border border-t-white border-l-white border-r-[#7d7d82] border-b-[#7d7d82] border-r-2 border-b-2">
          <ToolSection title="Crea" items={CREA} thumb="h-[181px]" />
          <div className="h-0.5 ml-[5px] mr-3 bg-[#8e8e96] border-b border-white"></div>
          <ToolSection title="Edita" items={EDITA} thumb="h-[203px]" />
        </div>
        <div className="flex flex-col w-[22px]">
          <button type="button" className="h-[136px] w-[22px] flex flex-col items-center gap-1 pt-1 border-r border-b border-[#7d7d82] rounded-br-[2px]">
            <Icon name="tabBuild" />
            <span className="[writing-mode:vertical-rl] rotate-180">Costruzioni</span>
          </button>
          {['tabBase', 'tabText', 'tabDim', 'tabSwap', 'tabWindow', 'tabPlan'].map(i => (
            <ToolButton key={i} icon={i} className="w-[21px] h-[23px] mb-px border-r-2 border-b-2 border-t border-t-white border-[#7d7d82] rounded-br-[2px]" />
          ))}
        </div>
      </div>
    </div>
    <div className="h-[23px] shrink-0 flex">
      <button type="button" className="w-[102px] pr-1 pt-[5px] flex items-center justify-center gap-0.5 bg-[#fcfcfe] border-b-2 border-[#f5a833] rounded-b-[2px]">
        <Icon name="tools" shadow={false} />
        Funzioni
      </button>
      <button type="button" className="w-[95px] h-[22px] pr-0.5 pt-1 flex items-center justify-center gap-0.5 bg-linear-to-b from-[#dcdcea] to-white border border-t-0 border-[#91a7b4] rounded-b-[2px]">
        <Icon name="props" shadow={false} />
        Proprietà
      </button>
      <button type="button" className="w-[96px] h-[22px] ml-px pt-1 flex items-center justify-center gap-0.5 bg-linear-to-b from-[#dcdcea] to-white border border-t-0 border-[#91a7b4] rounded-b-[2px]">
        <Icon name="bricks" shadow={false} />
        Assistenti
      </button>
    </div>
  </aside>
);

const ViewBar = () => (
  <div className="h-[22px] shrink-0 flex items-center pl-px pr-[3px] bg-[#e0dfe3] border-r border-[#9d9da1]">
    {['star8', 'zoom', 'hand', 'burst', 'minus', 'plus', 'back'].map(i => (
      <ToolButton key={i} icon={i} className="w-[19px] h-5" />
    ))}
    <ToolButton icon="target" className="w-[19px] h-[18px] bg-white border border-[#8fa5b8] rounded-[2px]" />
    {['dome', 'orbit', 'undoThin', 'redoThin', 'viewOpen'].map(i => (
      <ToolButton key={i} icon={i} className="w-[19px] h-5" />
    ))}
    <div className="relative w-[91px] h-4 ml-0.5 bg-white flex items-center">
      <select aria-label="Zoom" defaultValue="100.000" className="appearance-none w-full pl-px bg-transparent outline-none font-['Liberation_Sans',sans-serif] text-[9px]">
        <option>100.000</option>
      </select>
      <span className="absolute inset-y-0 right-0 w-3.5 bg-[#dedee6] flex items-center justify-center pointer-events-none"><Chevron /></span>
    </div>
    <ToolButton icon="pin" />
    <div className="ml-auto flex">
      {['box3d', 'split', 'pages'].map(i => <ToolButton key={i} icon={i} className="w-[19px] h-5" />)}
    </div>
  </div>
);

const HGrip = () => <div className="h-[3px] mx-1 border border-l-white border-t-white border-r-[#9d9da1] border-b-[#9d9da1] shrink-0"></div>;

const RightTools = () => (
  <aside className="w-7 shrink-0 flex flex-col bg-linear-to-r from-[#eeeeea] to-[#dfe2eb]">
    <div className="bg-[#e0dfe3] pt-1 pb-0.5 border-b border-[#9d9da1]">
      <HGrip />
      {RIGHT_TOP.map(i => <ToolButton key={i} icon={i} className="w-full pl-0.5 h-[23px]" />)}
      <div className="h-0.5 mt-[3px] mb-[3px] bg-[#9d9da1] border-b border-white"></div>
      <HGrip />
      {RIGHT_MID.map(i => <ToolButton key={i} icon={i} className="w-full pl-0.5 h-[23px]" />)}
      <div className="h-0.5 my-[5px] bg-[#9d9da1] border-b border-white"></div>
      <ToolButton icon="select" className="w-full pl-0.5 h-[23px]" />
      <ToolButton icon="selectArea" className="w-6 ml-[3px] h-[23px] bg-white border border-[#8fa5b8] rounded-[2px]" />
      {['sum', 'filter'].map(i => <ToolButton key={i} icon={i} className="w-full pl-0.5 h-[23px]" />)}
    </div>
  </aside>
);

const StatusCell = ({ className, children }) => <span className={`shrink-0 ${className}`}>{children}</span>;

const StatusBar = () => (
  <footer className="h-[14px] shrink-0 flex items-end pl-px leading-[11px] whitespace-nowrap border-t border-[#8e8e92] bg-linear-to-b from-[#c9cace] to-[#e0e0e6]">
    <span className="flex-1">Premere F1 per richiamare la 'Guida in linea'.</span>
    <StatusCell className="w-[52px]">Modalità:</StatusCell>
    <StatusCell className="w-[50px]">? Attiva</StatusCell>
    <StatusCell className="w-[132px]">Tipo disegno:</StatusCell>
    <StatusCell className="w-[142px]">Definizione scala</StatusCell>
    <StatusCell className="w-[54px] pl-1 border-l border-white">Scala:</StatusCell>
    <StatusCell className="w-[53px]">1 : 100</StatusCell>
    <StatusCell className="w-[53px] pl-1 border-l border-white">Misure:</StatusCell>
    <StatusCell className="w-4">m</StatusCell>
    <StatusCell className="w-[53px] pl-1 border-l border-white">Angolo:</StatusCell>
    <StatusCell className="w-[35px]">0.000</StatusCell>
    <StatusCell className="w-[26px] pl-1 border-l border-white">deg</StatusCell>
    <StatusCell className="w-[26px] pl-1 border-l border-white">%:</StatusCell>
    <StatusCell className="w-[30px]">1</StatusCell>
  </footer>
);

const App = () => {
  return (
    <div className="h-screen flex flex-col overflow-hidden bg-[#e0dfe3] text-black text-[11px] leading-[14px] font-['DejaVu_Sans_Condensed','Noto_Sans',sans-serif]">
      <TitleBar />
      <MenuBar />
      <Toolbar />
      <div className="flex-1 min-h-0 flex">
        <FunctionPanel />
        <main className="flex-1 min-w-0 ml-1.5 flex flex-col border-l-2 border-[#77777a]">
          <div className="flex-1 bg-white border-t border-[#6e6e62]"></div>
          <div className="h-0.5 bg-[#ebebe4] shrink-0"></div>
          <ViewBar />
        </main>
        <RightTools />
      </div>
      <div className="h-[31px] shrink-0 flex bg-linear-to-r from-[#ededeb] from-40% to-[#dfe2eb] border-t border-b-2 border-t-[#9d9da1] border-b-[#8e8e92]">
        <div className="flex items-center gap-1.5 pl-[3px] pr-2.5 bg-[#e0dfe3] border-r border-[#9d9da1]">
          <Grip />
          <p className="font-['Liberation_Sans',sans-serif] font-bold text-xs">
            Clic sinistro per selezione, CTRL+clic per aggiunta, MAIUSC + clic per selezione segmento
          </p>
        </div>
      </div>
      <StatusBar />
    </div>
  );
};

export default App;
